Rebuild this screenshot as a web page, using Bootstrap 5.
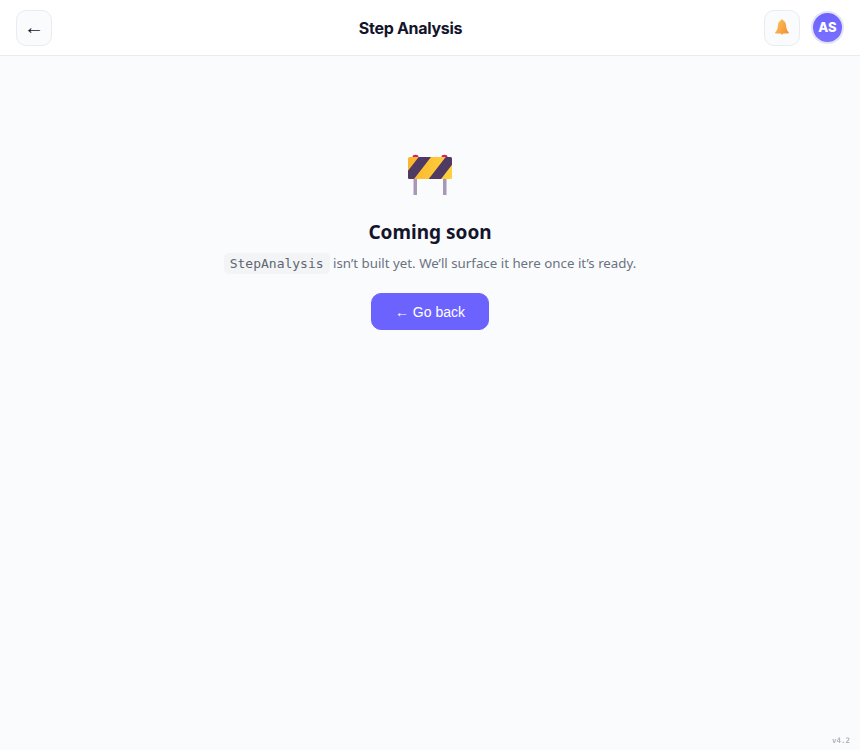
<!doctype html>
<html lang="en">
<head>
<meta charset="utf-8">
<title>Step Analysis</title>
<link href="https://cdn.jsdelivr.net/npm/bootstrap@5.3.0/dist/css/bootstrap.min.css" rel="stylesheet">
<style>
html,body{height:100%}
body{background:#fafbfd;font-family:"Noto Sans",sans-serif;color:#14142b}
.topbar{height:56px;background:#fff;border-bottom:1px solid #ebecf0;padding:0 16px}
.sqbtn{width:36px;height:36px;padding:0;border:1px solid #ebecf0;border-radius:10px;background:#fafbfd;color:#14142b}
.backarrow{font:20px/1 "Liberation Sans",sans-serif;padding-bottom:2px}
.pagetitle{font:700 16px/1 "Inter",sans-serif;color:#14142b;letter-spacing:-.3px;margin-left:5px}
.avatar{width:33px;height:33px;margin-left:3px;border:2px solid #e4e3f5;border-radius:50%;background:linear-gradient(#6c63ff,#7a70ff);color:#fff;font:800 13px/1 "Inter",sans-serif}
.emptybox{padding-top:96px}
.workicon{display:block;width:48px;height:48px;margin-bottom:18px}
.soontitle{font:700 19px/28px "Noto Sans",sans-serif;color:#14142b;margin:0 0 6px}
.soontext{font-size:13.3px;line-height:22px;color:#6b7280;margin:0 0 19px}
.soontext code{font:13px/1 "DejaVu Sans Mono",monospace;color:#5f6672;background:#f3f4f6;border-radius:5px;padding:3px 6px}
.backbtn{width:118px;height:37px;padding:0;background:#6c63ff;border:1px solid #6c63ff;border-radius:10px;color:#fff;font:14px/1 "Liberation Sans",sans-serif}
.backbtn:hover{background:#6c63ff;color:#fff}
.verstamp{position:fixed;right:10px;bottom:6px;font:700 7.5px/1 "DejaVu Sans Mono",monospace;color:#b0b4bc}
</style>
</head>
<body>
<header class="topbar d-flex align-items-center justify-content-between">
  <button class="sqbtn backarrow d-flex align-items-center justify-content-center" type="button" aria-label="Back">←</button>
  <div class="pagetitle">Step Analysis</div>
  <div class="d-flex align-items-center gap-2">
    <button class="sqbtn d-flex align-items-center justify-content-center" type="button" aria-label="Notifications">
      <svg width="18" height="18" viewBox="0 0 18 18"><defs><linearGradient id="bg" x1="0" y1="0" x2="1" y2=".6"><stop offset="0" stop-color="#fdc453"/><stop offset="1" stop-color="#f4953a"/></linearGradient></defs><circle cx="9" cy="1.600" r="1.200" fill="#f5ab40"/><path d="M9 1.600c-2.400 0-3.800 1.800-4 4.300-.2 2.900-.6 5-2.500 7.100-.5.600-.6 1.600.5 1.600h12c1.100 0 1-1 .5-1.600-1.900-2.100-2.300-4.200-2.500-7.100-.2-2.500-1.600-4.300-4-4.300z" fill="url(#bg)"/><path d="M7.600 14.600a1.500 1.500 0 0 0 2.800 0z" fill="#e88a2e"/></svg>
    </button>
    <div class="avatar d-flex align-items-center justify-content-center">AS</div>
  </div>
</header>
<main class="emptybox d-flex flex-column align-items-center text-center">
  <svg class="workicon" viewBox="0 0 48 48" role="img" aria-label="Under construction">
    <defs>
      <clipPath id="cp"><rect x="2" y="5" width="44" height="22" rx="1.500"/></clipPath>
      <linearGradient id="yl" x1="0" y1="0" x2="1" y2="0"><stop offset="0" stop-color="#fbb62c"/><stop offset="1" stop-color="#fdd13f"/></linearGradient>
    </defs>
    <rect x="7.500" y="27" width="3.500" height="16" fill="#a898b8"/>
    <rect x="37" y="27" width="3.500" height="16" fill="#a898b8"/>
    <ellipse cx="9.500" cy="5" rx="3" ry="2.300" fill="#d81e6a"/>
    <ellipse cx="38.500" cy="5" rx="3" ry="2.300" fill="#d81e6a"/>
    <g clip-path="url(#cp)">
      <rect x="2" y="5" width="44" height="22" fill="url(#yl)"/>
      <path d="M12.700 5H25L8 27H-4.300zM39.700 5H52L35 27H22.700z" fill="#4e3a63"/>
    </g>
  </svg>
  <h1 class="soontitle">Coming soon</h1>
  <p class="soontext"><code>StepAnalysis</code> isn’t built yet. We’ll surface it here once it’s ready.</p>
  <button class="btn backbtn" type="button">← Go back</button>
</main>
<div class="verstamp">v4.2</div>
</body>
</html>
